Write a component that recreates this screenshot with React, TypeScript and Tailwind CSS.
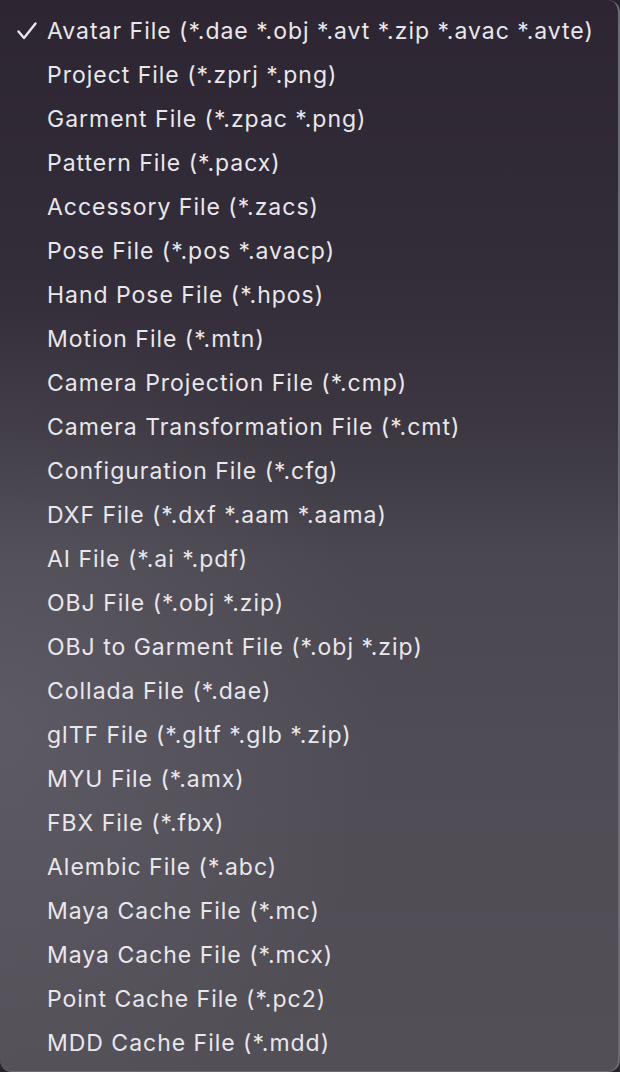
import React from "react";

const items = [
  "Avatar File (*.dae *.obj *.avt *.zip *.avac *.avte)",
  "Project File (*.zprj *.png)",
  "Garment File (*.zpac *.png)",
  "Pattern File (*.pacx)",
  "Accessory File (*.zacs)",
  "Pose File (*.pos *.avacp)",
  "Hand Pose File (*.hpos)",
  "Motion File (*.mtn)",
  "Camera Projection File (*.cmp)",
  "Camera Transformation File (*.cmt)",
  "Configuration File (*.cfg)",
  "DXF File (*.dxf *.aam *.aama)",
  "AI File (*.ai *.pdf)",
  "OBJ File (*.obj *.zip)",
  "OBJ to Garment File (*.obj *.zip)",
  "Collada File (*.dae)",
  "glTF File (*.gltf *.glb *.zip)",
  "MYU File (*.amx)",
  "FBX File (*.fbx)",
  "Alembic File (*.abc)",
  "Maya Cache File (*.mc)",
  "Maya Cache File (*.mcx)",
  "Point Cache File (*.pc2)",
  "MDD Cache File (*.mdd)",
];

export default function App() {
  return (
    <div className="w-[620px] h-[1072px] bg-[#26242a] overflow-hidden">
      <div
        className="relative w-[620px] h-[1072px] rounded-tr-[12px] rounded-b-[12px] border-r-2 border-b border-[#6c6a72] bg-[linear-gradient(180deg,#2d2632_0%,#332c39_25%,#3c3741_40%,#4a4750_52%,#4f4c55_70%,#524f57_100%)] pt-[9px]"
        style={{ fontFamily: "Inter, 'Noto Sans', sans-serif" }}
      >
        <div className="absolute inset-0 rounded-b-[12px] bg-[radial-gradient(ellipse_380px_420px_at_0px_720px,rgba(120,116,130,0.35),rgba(120,116,130,0)_100%)] pointer-events-none" />
        <div className="relative flex flex-col">
          {items.map((t, i) => (
            <div key={t} className="h-[44px] flex items-center text-[23px] text-[#e9e7ec] tracking-[0.98px]">
              <span className="w-[47px] shrink-0 flex items-center justify-end pr-[9px]">
                {i === 0 && (
                  <svg width="22" height="20" viewBox="0 0 22 20" fill="none">
                    <path d="M2.5 10.5 L8 17 L19.5 2.5" stroke="#e9e7ec" strokeWidth="2.4" strokeLinecap="round" strokeLinejoin="round" />
                  </svg>
                )}
              </span>
              <span className="whitespace-nowrap">{t}</span>
            </div>
          ))}
        </div>
      </div>
    </div>
  );
}
